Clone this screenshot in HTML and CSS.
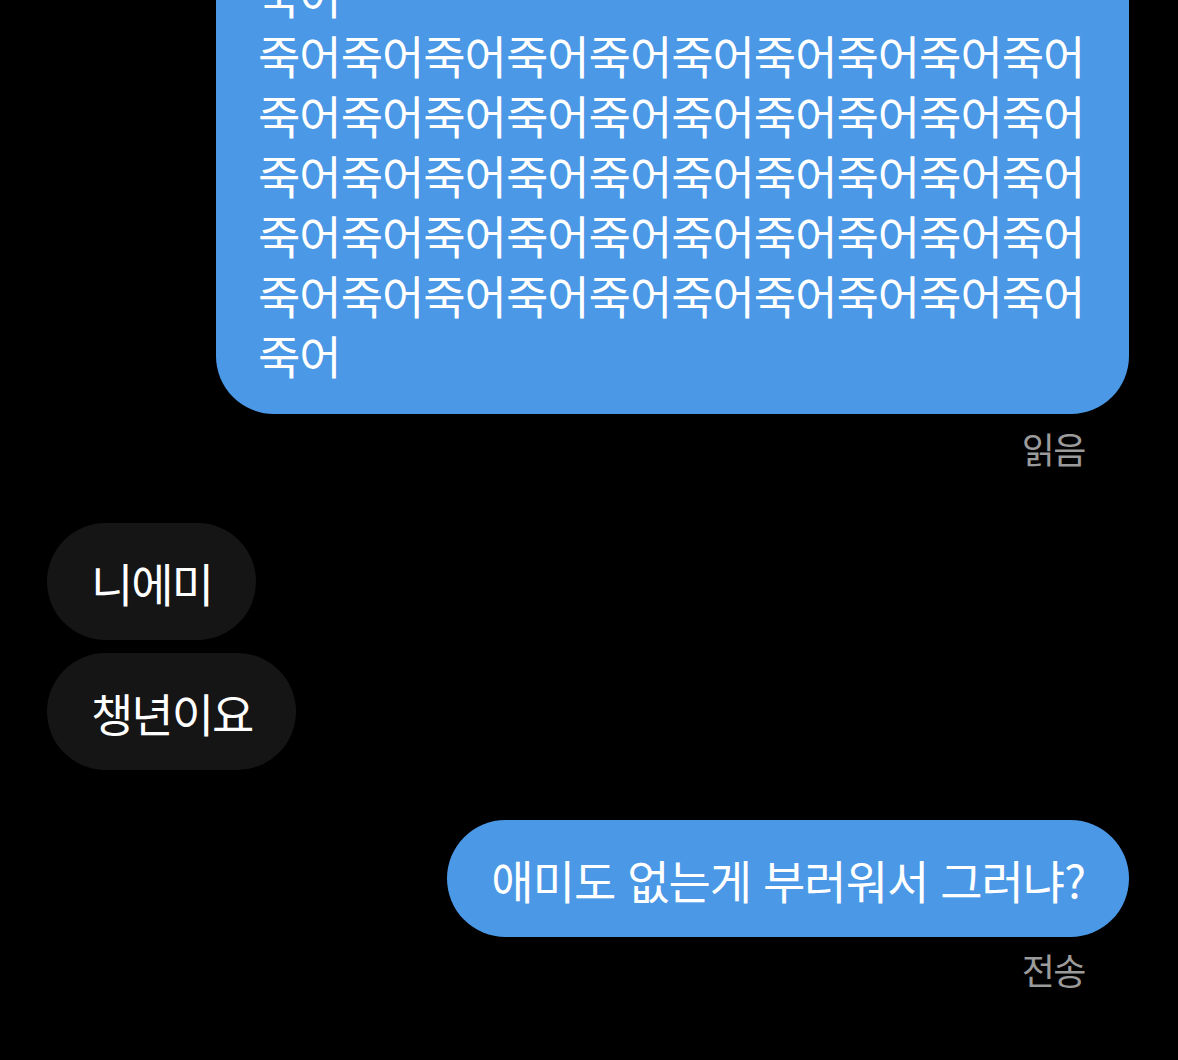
FILE: index.html
```html
<!DOCTYPE html>
<html lang="ko">
<head>
<meta charset="UTF-8">
<meta name="viewport" content="width=device-width, initial-scale=1.0">
<title>메시지</title>
<link rel="stylesheet" href="styles.css">
</head>
<body>
<div class="chat">
  <div class="bubble out first">죽어<br>죽어죽어죽어죽어죽어죽어죽어죽어죽어죽어죽어죽어죽어죽어죽어죽어죽어죽어죽어죽어죽어죽어죽어죽어죽어죽어죽어죽어죽어죽어죽어죽어죽어죽어죽어죽어죽어죽어죽어죽어죽어죽어죽어죽어죽어죽어죽어죽어죽어죽어죽어</div>
  <div class="status">읽음</div>

  <div class="bubble in gap-big">니에미</div>
  <div class="bubble in gap-small">챙년이요</div>

  <div class="bubble out gap-mid">애미도 없는게 부러워서 그러냐?</div>
  <div class="status">전송</div>
</div>
</body>
</html>
```

FILE: styles.css
```css
html, body {
  margin: 0;
  background: #000;
  height: 100%;
  overflow: hidden;
}

body {
  font-family: "Noto Sans CJK KR", "Noto Sans", sans-serif;
  color: #fff;
}

.chat {
  display: flex;
  flex-direction: column;
  padding: 0 49px 0 47px;
}

.bubble {
  box-sizing: border-box;
  max-width: 913px;
  padding: 29px 44px 28px;
  border-radius: 59px;
  font-size: 46px;
  line-height: 60px;
  letter-spacing: -1px;
  word-break: break-all;
}

.bubble.out {
  align-self: flex-end;
  background: #4a98e6;
}

.bubble.in {
  align-self: flex-start;
  background: #151515;
  letter-spacing: -2px;
}

/* long message, scrolled partly off the top */
.bubble.first {
  width: 913px;
  margin-top: -66px;
  padding: 30px 38px 30px 42px;
  border-radius: 58px;
}

.status {
  align-self: flex-end;
  margin: 14px 44px 0 0;
  font-size: 36px;
  line-height: 40px;
  letter-spacing: -1.5px;
  color: #9b9b9b;
}

.gap-big { margin-top: 55px; }
.gap-small { margin-top: 13px; }
.gap-mid { margin-top: 50px; }

.gap-mid + .status { margin-top: 12px; }
```
